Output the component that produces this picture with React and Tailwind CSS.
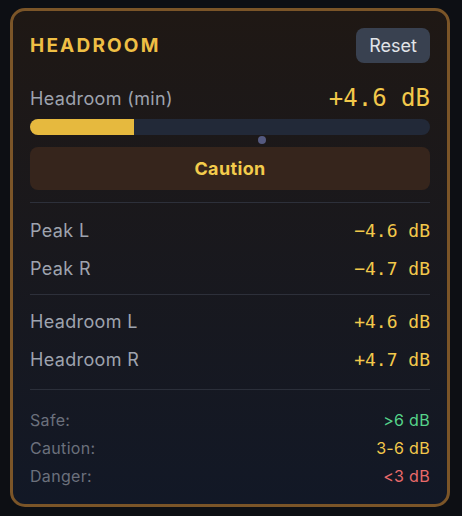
const sans = { fontFamily: 'Inter, "Noto Sans", sans-serif' };

const Row = ({ label, value }) => (
  <div className="flex h-[38px] items-center justify-between">
    <span className="text-[18px] tracking-[0.02em] text-[#9ea3ae]">{label}</span>
    <span className="font-['DejaVu_Sans_Mono',monospace] text-[18px] text-[#f2c84b]">{value}</span>
  </div>
);

const Legend = ({ label, value, color }) => (
  <div className="flex h-[28px] items-center justify-between text-[16px] tracking-[0.02em]">
    <span className="text-[#6b707c]">{label}</span>
    <span className={color}>{value}</span>
  </div>
);

export default function App() {
  return (
    <div className="min-h-screen bg-[#0d0f14] pl-[10px] pt-[8px]" style={sans}>
      <div className="h-[499px] w-[440px] rounded-[15px] border-[3px] border-[#7b5528] bg-gradient-to-b from-[#1f1814] to-[#121826] p-[17px]">
        {/* header */}
        <div className="flex h-[35px] items-center justify-between">
          <h2 className="pt-[2px] text-[19px] font-bold tracking-[0.115em] text-[#efbf45]">HEADROOM</h2>
          <button className="h-[35px] w-[74px] rounded-lg bg-[#394150] text-[18px] text-[#e2e4e8]">Reset</button>
        </div>

        {/* min headroom */}
        <div className="mt-[22px] flex h-[26px] items-center justify-between">
          <span className="text-[18px] tracking-[0.02em] text-[#9ea3ae]">Headroom (min)</span>
          <span className="font-['DejaVu_Sans_Mono',monospace] text-[24px] text-[#f2c84b]">+4.6 dB</span>
        </div>

        <div className="relative mt-[8px] h-[16px] rounded-full bg-[#222938]">
          <div className="h-full w-[26%] rounded-l-full bg-[#e6b93e]" />
          <div className="absolute left-[228px] top-[17px] h-[8px] w-[8px] rounded-full bg-[#555a80]" />
        </div>

        <div className="mt-[12px] flex h-[43px] items-center justify-center rounded-lg bg-[#36251c]">
          <span className="text-[18px] font-bold tracking-[0.02em] text-[#f3cc4c]">Caution</span>
        </div>

        <div className="mt-[12px] h-px bg-[#2d303a]" />
        <div className="mt-[8px]">
          <Row label="Peak L" value="−4.6 dB" />
          <Row label="Peak R" value="−4.7 dB" />
        </div>
        <div className="mt-[7px] h-px bg-[#2d303a]" />
        <div className="mt-[7px]">
          <Row label="Headroom L" value="+4.6 dB" />
          <Row label="Headroom R" value="+4.7 dB" />
        </div>
        <div className="mt-[11px] h-px bg-[#2b2f3a]" />
        <div className="mt-[16px]">
          <Legend label="Safe:" value=">6 dB" color="text-[#55d38a]" />
          <Legend label="Caution:" value="3-6 dB" color="text-[#f2c84b]" />
          <Legend label="Danger:" value="<3 dB" color="text-[#e86a6a]" />
        </div>
      </div>
    </div>
  );
}
